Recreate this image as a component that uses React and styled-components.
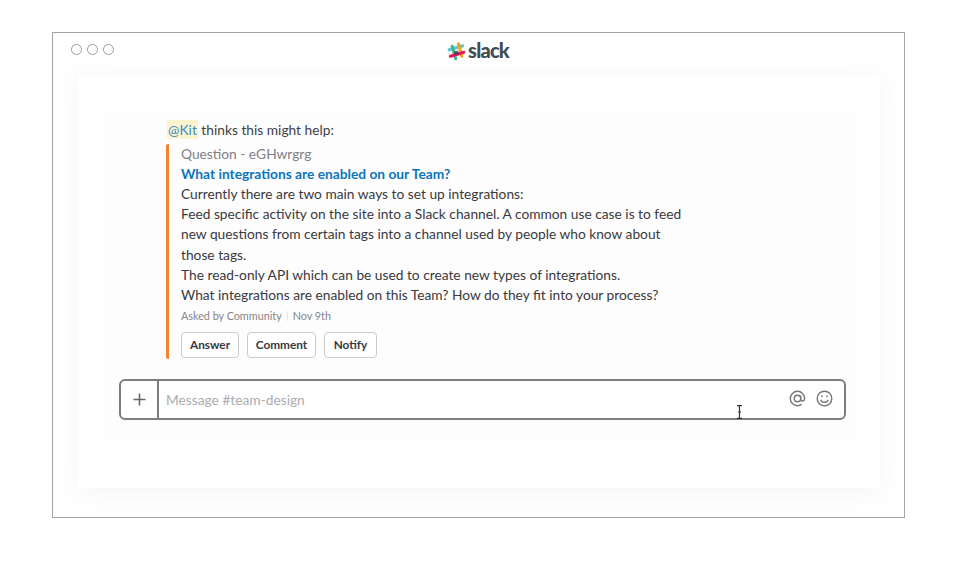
import React from "react";
import styled, { createGlobalStyle } from "styled-components";

const Global = createGlobalStyle`
  html, body { margin: 0; padding: 0; background: #fff; }
  body { font-family: Lato, "Open Sans", sans-serif; color: #3d3c40; }
`;
const Page = styled.div`
  width: 960px; height: 570px; padding: 32px 0 0 52px; box-sizing: border-box; overflow: hidden;
`;
const Window = styled.div`
  width: 853px; height: 486px; box-sizing: border-box; border: 1px solid #a3a3a3;
  display: flex; flex-direction: column; background: #fff;
`;
const TitleBar = styled.div`
  height: 42px; flex: none; position: relative; display: flex; align-items: center; justify-content: center;
`;
const Lights = styled.div`
  position: absolute; left: 18px; top: 11px; display: flex; gap: 5px;
`;
const Light = styled.span`
  width: 11px; height: 11px; box-sizing: border-box; border: 1px solid #9a9a9a; border-radius: 50%;
`;
const Brand = styled.div`
  display: flex; align-items: center; gap: 2px; margin-bottom: 6px; margin-left: -1px;
`;
const BrandName = styled.span`
  font-family: Lato, sans-serif; font-weight: 900; font-size: 20px; letter-spacing: -0.8px; color: #414c54; line-height: 20px; margin-top: -3px;
`;
const Shell = styled.div`
  margin: 0 24px 29px 25px; flex: 1; background: #fff;
  box-shadow: 0 3px 26px 3px rgba(0,0,0,0.04);
  padding: 40px 28px 48px 29px; display: flex;
`;
const Panel = styled.div`
  flex: 1; background: #fdfdfd; box-shadow: 0 0 14px 4px rgba(0,0,0,0.012);
  padding: 5px 6px 20px 12px; display: flex; flex-direction: column;
`;
const Message = styled.div`
  padding-left: 47px; font-size: 13.75px; line-height: 20px; color: #3f3e43;
`;
const Mention = styled.span`
  background: #fdf3cf; color: #3b8dc4; border-radius: 2px; padding: 1px; margin-left: 1px;
`;
const Attachment = styled.div`
  margin-top: 4px; border-left: 3px solid #f5812d; border-radius: 2px; padding-left: 12px; width: 540px; height: 215px; box-sizing: border-box;
`;
const Service = styled.div`color: #808085; line-height: 20px;`;
const Title = styled.div`color: #0b75bd; font-weight: 700; line-height: 19px; margin-bottom: 1px;`;
const Line = styled.div`color: #3a393e; line-height: 20.2px; white-space: nowrap;`;
const Meta = styled.div`
  color: #85848a; font-size: 10.8px; line-height: 16px; margin-top: 3px; display: flex; align-items: center; gap: 5px;
`;
const Pipe = styled.span`width: 1px; height: 10px; background: #e6e6e6;`;
const Actions = styled.div`display: flex; gap: 8px; margin-top: 8px;`;
const ActionButton = styled.div`
  height: 26px; box-sizing: border-box; border: 1px solid #cbcbcb; border-radius: 4px; background: #fff;
  font-size: 11.8px; font-weight: 700; color: #38373c; display: flex; align-items: center; justify-content: center; width: ${p => p.$w}px;
`;
const Composer = styled.div`
  margin-top: 20px; height: 41px; width: 727px; box-sizing: border-box; border: 2px solid #7d7d7d; border-radius: 6px;
  display: flex; position: relative; background: #fff;
`;
const Plus = styled.div`
  width: 36px; flex: none; border-right: 2px solid #7d7d7d; display: flex; align-items: center; justify-content: center;
`;
const Placeholder = styled.div`
  flex: 1; padding-left: 7px; font-size: 13.75px; line-height: 38px; color: #acacaf;
`;
const ComposerIcons = styled.div`
  display: flex; gap: 10px; align-items: center; padding-right: 11px; margin-top: -3px;
`;
const Cursor = styled.svg`
  position: absolute; left: 615px; top: 24px;
`;

const SlackLogo = () => (
  <svg width="19" height="19" viewBox="0 0 19 19">
    <g strokeLinecap="round" strokeWidth="3.2" fill="none">
      <path d="M2.2 7.8 L15.6 3.9" stroke="#5ec6d6" />
      <path d="M5.2 4.4 L8.7 16.6" stroke="#3eb890" />
      <path d="M11.4 2 L14.9 14.2" stroke="#e9a820" />
      <path d="M3.4 14.2 L16.8 10.3" stroke="#e01a59" />
    </g>
    <path d="M7 9.6 L10.8 8.5 L11.8 12 L8 13.1Z" fill="#3a2a3a" opacity=".75" />
  </svg>
);

const App = () => (
  <Page>
    <Global />
    <Window>
      <TitleBar>
        <Lights><Light /><Light /><Light /></Lights>
        <Brand><SlackLogo /><BrandName>slack</BrandName></Brand>
      </TitleBar>
      <Shell>
        <Panel>
          <Message>
            <Mention>@Kit</Mention> thinks this might help:
            <Attachment>
              <Service>Question - eGHwrgrg</Service>
              <Title>What integrations are enabled on our Team?</Title>
              <Line>Currently there are two main ways to set up integrations:</Line>
              <Line>Feed specific activity on the site into a Slack channel. A common use case is to feed</Line>
              <Line>new questions from certain tags into a channel used by people who know about</Line>
              <Line>those tags.</Line>
              <Line>The read-only API which can be used to create new types of integrations.</Line>
              <Line>What integrations are enabled on this Team? How do they fit into your process?</Line>
              <Meta>Asked by Community <Pipe /> Nov 9th</Meta>
              <Actions>
                <ActionButton $w={58}>Answer</ActionButton>
                <ActionButton $w={69}>Comment</ActionButton>
                <ActionButton $w={53}>Notify</ActionButton>
              </Actions>
            </Attachment>
          </Message>
          <Composer>
            <Plus>
              <svg width="13" height="13" viewBox="0 0 13 13"><path d="M6.5 0.5V12.5M0.5 6.5H12.5" stroke="#666" strokeWidth="1.6" /></svg>
            </Plus>
            <Placeholder>Message #team-design</Placeholder>
            <ComposerIcons>
              <svg width="17" height="17" viewBox="0 0 17 17" fill="none" stroke="#777" strokeWidth="1.4"><circle cx="8.5" cy="8.5" r="3.2" /><path d="M11.7 5.6V9.6C11.7 11.6 15.6 11.6 15.6 8.5C15.6 4.5 12.4 1.3 8.5 1.3C4.5 1.3 1.3 4.5 1.3 8.5C1.3 12.5 4.5 15.7 8.5 15.7C10.2 15.7 11.4 15.3 12.6 14.4" /></svg>
              <svg width="17" height="17" viewBox="0 0 17 17" fill="none" stroke="#777" strokeWidth="1.4"><circle cx="8.5" cy="8.5" r="7.3" /><path d="M4.8 9.8C5.6 13 11.4 13 12.2 9.8" /><circle cx="6" cy="6.2" r=".9" fill="#777" stroke="none" /><circle cx="11" cy="6.2" r=".9" fill="#777" stroke="none" /></svg>
            </ComposerIcons>
            <Cursor width="7" height="14" viewBox="0 0 7 14" fill="none" stroke="#333" strokeWidth="1.2"><path d="M1 .6H6M3.5 .6V13.4M1 13.4H6M2 7H5" /></Cursor>
          </Composer>
        </Panel>
      </Shell>
    </Window>
  </Page>
);
export default App;
